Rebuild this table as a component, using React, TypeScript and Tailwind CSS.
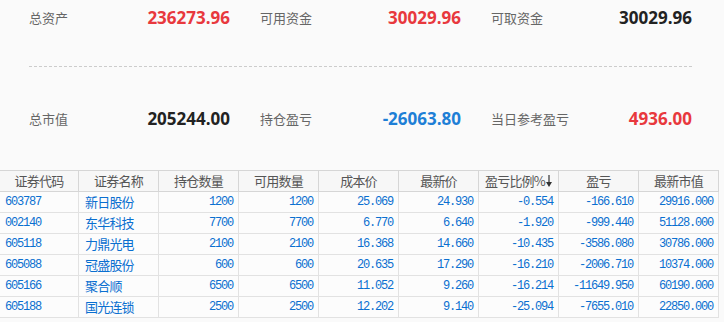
import React from "react";

const cjk = { fontFamily: '"Noto Sans CJK SC", "Noto Sans", sans-serif' };
const cjkTable = { fontFamily: '"Noto Sans CJK SC", "Noto Sans", sans-serif', letterSpacing: "-0.8px" };
const num = { fontFamily: '"Open Sans", "Noto Sans", sans-serif' };
const mono = { fontFamily: '"Liberation Mono", "DejaVu Sans Mono", monospace', letterSpacing: "-1.2px" };

type Stat = { label: string; value: string; color: string };

const row1: Stat[] = [
  { label: "总资产", value: "236273.96", color: "text-[#e8383d]" },
  { label: "可用资金", value: "30029.96", color: "text-[#e8383d]" },
  { label: "可取资金", value: "30029.96", color: "text-[#222222]" },
];
const row2: Stat[] = [
  { label: "总市值", value: "205244.00", color: "text-[#222222]" },
  { label: "持仓盈亏", value: "-26063.80", color: "text-[#1e7fd6]" },
  { label: "当日参考盈亏", value: "4936.00", color: "text-[#e8383d]" },
];

function StatRow({ items }: { items: Stat[] }) {
  return (
    <div className="grid grid-cols-3 gap-[30px] h-[36px] items-center">
      {items.map((s) => (
        <div key={s.label} className="flex items-center justify-between">
          <span className="text-[13px] text-[#666666]" style={cjk}>
            {s.label}
          </span>
          <span className={`text-[17px] font-bold ${s.color}`} style={num}>
            {s.value}
          </span>
        </div>
      ))}
    </div>
  );
}

const headers = ["证券代码", "证券名称", "持仓数量", "可用数量", "成本价", "最新价", "盈亏比例%", "盈亏", "最新市值"];

const rows = [
  ["603787", "新日股份", "1200", "1200", "25.069", "24.930", "-0.554", "-166.610", "29916.000"],
  ["002140", "东华科技", "7700", "7700", "6.770", "6.640", "-1.920", "-999.440", "51128.000"],
  ["605118", "力鼎光电", "2100", "2100", "16.368", "14.660", "-10.435", "-3586.080", "30786.000"],
  ["605088", "冠盛股份", "600", "600", "20.635", "17.290", "-16.210", "-2006.710", "10374.000"],
  ["605166", "聚合顺", "6500", "6500", "11.052", "9.260", "-16.214", "-11649.950", "60190.000"],
  ["605188", "国光连锁", "2500", "2500", "12.202", "9.140", "-25.094", "-7655.010", "22850.000"],
];

function DownArrow() {
  return (
    <svg width="6" height="12" viewBox="0 0 6 12" className="ml-[1px]">
      <line x1="3" y1="0" x2="3" y2="8" stroke="#333" strokeWidth="1.2" />
      <polygon points="0,7 6,7 3,12" fill="#333" />
    </svg>
  );
}

export default function App() {
  return (
    <div className="w-[724px] h-[322px] bg-[#fafafa] overflow-hidden">
      <div className="pl-[29px] pr-[32px]">
        <StatRow items={row1} />
        <div className="mt-[30px] border-t border-dashed border-[#cccccc]" />
        <div className="mt-[34px]">
          <StatRow items={row2} />
        </div>
      </div>
      <div className="mt-[33px] w-[719px] border-t border-[#d6d6d6]">
        <div className="flex h-[21px] border-b border-[#d6d6d6] bg-[#f7f7f7]">
          {headers.map((h, i) => (
            <div
              key={h}
              className={`${i === 0 ? "w-[79px]" : "w-[80px]"} shrink-0 border-r border-[#d6d6d6] flex items-center justify-center text-[13px] text-[#555555]`}
              style={cjkTable}
            >
              {h}
              {i === 6 && <DownArrow />}
            </div>
          ))}
        </div>
        {rows.map((r) => (
          <div key={r[0]} className="flex h-[21px] border-b border-[#e2e2e2] bg-[#fcfcfc]">
            {r.map((c, i) => (
              <div
                key={i}
                className={`${i === 0 ? "w-[79px]" : "w-[80px]"} shrink-0 border-r border-[#e2e2e2] flex items-center text-[#0a6fd0] ${
                  i === 1 ? "text-[13px]" : "text-[12px]"
                } ${i === 0 ? "justify-start pl-[5px]" : i === 1 ? "justify-start pl-[6px]" : "justify-end pr-[5px]"}`}
                style={i === 1 ? cjkTable : mono}
              >
                {c}
              </div>
            ))}
          </div>
        ))}
      </div>
    </div>
  );
}
